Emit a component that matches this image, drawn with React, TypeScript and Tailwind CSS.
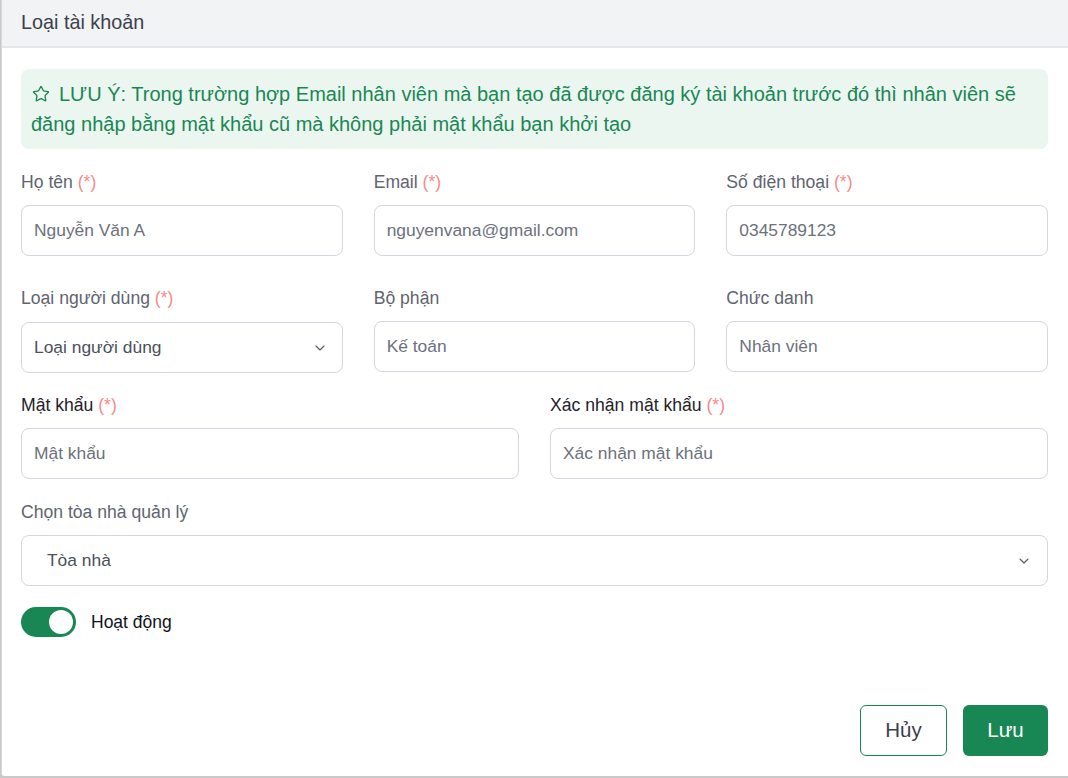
import { ChevronDown, Star } from "lucide-react";

const font = { fontFamily: '"Liberation Sans", Arial, sans-serif' };

function Label({ text, required, dark }: { text: string; required?: boolean; dark?: boolean }) {
  return (
    <div className={`text-[17.6px] leading-6 ${dark ? "text-[#1f2329]" : "text-[#5f6470]"}`}>
      {text}
      {required && <span className="text-[#f58b8b]"> (*)</span>}
    </div>
  );
}

function Field({ label, required, placeholder, dark }: { label: string; required?: boolean; placeholder: string; dark?: boolean }) {
  return (
    <div className="flex flex-col gap-[11px]">
      <Label text={label} required={required} dark={dark} />
      <div className="h-[51px] rounded-lg border border-[#d3d6de] bg-white px-[12px] flex items-center text-[17.4px] text-[#6c717c]">
        {placeholder}
      </div>
    </div>
  );
}

export default function App() {
  return (
    <div className="w-[1068px] h-[778px] bg-[#c9c9c9] overflow-hidden" style={font}>
      <div className="ml-[1px] h-[776px] bg-white border-l border-[#d9d9d9] rounded-bl-[3px] flex flex-col">
        {/* header */}
        <div className="h-[48px] bg-[#f2f3f5] border-b-2 border-[#e4e6ea] pl-[19px] flex items-center">
          <span className="text-[19.8px] text-[#3b3f4c]">Loại tài khoản</span>
        </div>

        <div className="pl-[19px] pr-[20px] pt-[21px] flex flex-col">
          {/* notice */}
          <div className="rounded-lg bg-[#ecf6f1] px-[10px] py-[10px] text-[20px] leading-[30px] text-[#198754]">
            <Star size={18} strokeWidth={1.8} className="inline-block align-[-2px] mr-[9px] ml-[1px]" />
            LƯU Ý: Trong trường hợp Email nhân viên mà bạn tạo đã được đăng ký tài khoản trước đó thì nhân viên sẽ
            <br />
            đăng nhập bằng mật khẩu cũ mà không phải mật khẩu bạn khởi tạo
          </div>

          <div className="grid grid-cols-3 gap-x-[31px] mt-[21px]">
            <Field label="Họ tên" required placeholder="Nguyễn Văn A" />
            <Field label="Email" required placeholder="nguyenvana@gmail.com" />
            <Field label="Số điện thoại" required placeholder="0345789123" />
          </div>

          <div className="grid grid-cols-3 gap-x-[31px] mt-[30px]">
            <div className="flex flex-col gap-[12px]">
              <Label text="Loại người dùng" required />
              <div className="h-[51px] rounded-lg border border-[#d3d6de] bg-white pl-[12px] pr-[14px] flex items-center justify-between text-[17.4px] text-[#4b505b]">
                <span>Loại người dùng</span>
                <ChevronDown size={16} strokeWidth={1.6} className="text-[#555a64]" />
              </div>
            </div>
            <Field label="Bộ phận" placeholder="Kế toán" />
            <Field label="Chức danh" placeholder="Nhân viên" />
          </div>

          <div className="grid grid-cols-2 gap-x-[31px] mt-[20px]">
            <Field label="Mật khẩu" required placeholder="Mật khẩu" dark />
            <Field label="Xác nhận mật khẩu" required placeholder="Xác nhận mật khẩu" dark />
          </div>

          <div className="flex flex-col gap-[11px] mt-[21px]">
            <Label text="Chọn tòa nhà quản lý" />
            <div className="h-[51px] rounded-lg border border-[#d3d6de] bg-white pl-[25px] pr-[15px] flex items-center justify-between text-[17.4px] text-[#4b505b]">
              <span>Tòa nhà</span>
              <ChevronDown size={16} strokeWidth={1.6} className="text-[#555a64]" />
            </div>
          </div>

          <div className="flex items-center gap-[15px] mt-[21px]">
            <div className="w-[55px] h-[30px] rounded-full bg-[#198754] flex items-center justify-end px-[3px]">
              <div className="w-[24px] h-[24px] rounded-full bg-white" />
            </div>
            <span className="text-[17.5px] text-[#111318]">Hoạt động</span>
          </div>

          <div className="flex justify-end gap-[16px] mt-[68px]">
            <button className="w-[87px] h-[51px] rounded-md border border-[#198754] bg-white text-[20.5px] text-[#3b3f4c]">
              Hủy
            </button>
            <button className="w-[85px] h-[51px] rounded-md bg-[#198754] text-[20.5px] text-white">Lưu</button>
          </div>
        </div>
      </div>
    </div>
  );
}
